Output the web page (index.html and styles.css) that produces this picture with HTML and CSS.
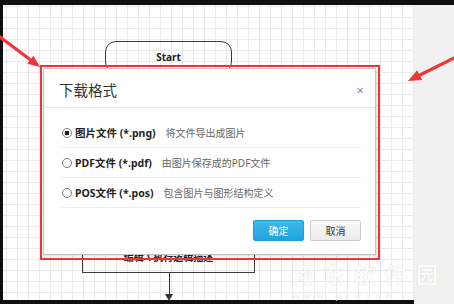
FILE: index.html
```html
<!DOCTYPE html>
<html lang="zh-CN">
<head>
<meta charset="utf-8">
<title>下载格式</title>
<link rel="stylesheet" href="styles.css">
</head>
<body>
<div class="screen">
  <div class="canvas">
    <div class="node start">Start</div>
    <div class="node process"><span>编辑 \ 执行逻辑描述</span></div>
    <div class="connector"></div>
  </div>
  <div class="side"></div>

  <div class="dialog">
    <div class="dlg-head">
      <span class="dlg-title">下载格式</span>
      <span class="dlg-close">×</span>
    </div>
    <div class="dlg-body">
      <div class="opt">
        <span class="radio checked"></span>
        <span class="opt-label">图片文件 (*.png)</span>
        <span class="opt-desc">将文件导出成图片</span>
      </div>
      <div class="opt">
        <span class="radio"></span>
        <span class="opt-label">PDF文件 (*.pdf)</span>
        <span class="opt-desc">由图片保存成的PDF文件</span>
      </div>
      <div class="opt">
        <span class="radio"></span>
        <span class="opt-label">POS文件 (*.pos)</span>
        <span class="opt-desc">包含图片与图形结构定义</span>
      </div>
    </div>
    <div class="dlg-foot">
      <span class="btn btn-primary">确定</span>
      <span class="btn btn-default">取消</span>
    </div>
  </div>

  <div class="annot"></div>
  <svg class="arrows" width="454" height="304" viewBox="0 0 454 304">
    <line x1="-2" y1="35.5" x2="32" y2="61" stroke="#ef3535" stroke-width="3.2"/>
    <polygon points="40,67 27.4,63.8 33.4,55.8" fill="#ef3535"/>
    <line x1="456" y1="57" x2="419" y2="75.5" stroke="#ef3535" stroke-width="3.2"/>
    <polygon points="408,81 422.1,80.1 417.1,70.3" fill="#ef3535"/>
  </svg>

  <div class="watermark">
    <div class="wm-big">河东软件园</div>
    <div class="wm-small">www.pc0359.cn</div>
  </div>
</div>
</body>
</html>
```

FILE: styles.css
```css
html, body {
  margin: 0;
  padding: 0;
}

body {
  font-family: "Noto Sans", "Noto Sans CJK SC", sans-serif;
}

.screen {
  position: relative;
  width: 454px;
  height: 304px;
  box-sizing: border-box;
  padding: 5px 0 0 3px;
  background: #101010;
  display: flex;
  align-items: stretch;
  overflow: hidden;
}

.canvas {
  position: relative;
  width: 411px;
  margin-bottom: 4px;
  background-color: #ffffff;
  background-image:
    linear-gradient(to right, #eaeaea 1px, transparent 1px),
    linear-gradient(to bottom, #eaeaea 1px, transparent 1px);
  background-size: 11px 11px;
  background-position: 3px 1px;
}

.side {
  flex: 1;
  background: #f1f1f1;
}

.node {
  position: absolute;
  box-sizing: border-box;
  border: 1.5px solid #3a3a3a;
  display: flex;
  align-items: center;
  justify-content: center;
  font-weight: bold;
  font-size: 10px;
  color: #222;
}

.start {
  left: 102px;
  top: 36px;
  width: 127px;
  height: 32px;
  border-radius: 11px;
}

.process {
  left: 79px;
  top: 230px;
  width: 173px;
  height: 38px;
  padding-top: 4px;
  font-size: 10px;
}

.connector {
  position: absolute;
  left: 165.5px;
  top: 268px;
  width: 1.5px;
  height: 22px;
  background: #333;
}

.connector::after {
  content: "";
  position: absolute;
  left: -3.5px;
  top: 21px;
  border-left: 4.25px solid transparent;
  border-right: 4.25px solid transparent;
  border-top: 7px solid #333;
}

.dialog {
  position: absolute;
  left: 43px;
  top: 68px;
  width: 333px;
  height: 187px;
  box-sizing: border-box;
  background: #ffffff;
  border: 1px solid #c2c2c2;
  box-shadow: 1px 1px 2px rgba(0, 0, 0, 0.15);
  display: flex;
  flex-direction: column;
}

.dlg-head {
  height: 39px;
  box-sizing: border-box;
  border-bottom: 1px solid #e8e8e8;
  display: flex;
  align-items: center;
  justify-content: space-between;
  padding: 3px 11px 0 15px;
}

.dlg-title {
  font-size: 14.5px;
  color: #333;
}

.dlg-close {
  font-size: 13px;
  color: #8a8a8a;
}

.dlg-body {
  padding: 10px 14px 0 15px;
}

.opt {
  height: 30px;
  box-sizing: border-box;
  border-bottom: 1px solid #ededed;
  display: flex;
  align-items: center;
  padding-left: 3px;
}

.radio {
  width: 10px;
  height: 10px;
  box-sizing: border-box;
  border: 1px solid #7a7a7a;
  border-radius: 50%;
  margin-right: 3px;
  flex: none;
}

.radio.checked {
  background: radial-gradient(circle, #222 0 2.2px, transparent 2.6px);
}

.opt-label {
  font-weight: bold;
  font-size: 10.5px;
  color: #222;
}

.opt-desc {
  margin-left: 10px;
  font-size: 10px;
  color: #666;
}

.dlg-foot {
  display: flex;
  justify-content: flex-end;
  gap: 6px;
  padding: 12px 14px 0 0;
}

.btn {
  width: 51px;
  height: 21px;
  box-sizing: border-box;
  border-radius: 2px;
  display: flex;
  align-items: center;
  justify-content: center;
  font-size: 10px;
}

.btn-primary {
  background: linear-gradient(#40b9ec, #1fa3dc);
  border: 1px solid #1e9fd6;
  color: #ffffff;
}

.btn-default {
  background: linear-gradient(#f9f9f9, #ececec);
  border: 1px solid #cdcdcd;
  color: #333;
}

.annot {
  position: absolute;
  left: 40px;
  top: 65px;
  width: 340px;
  height: 195px;
  box-sizing: border-box;
  border: 2px solid #f23333;
}

.arrows {
  position: absolute;
  left: 0;
  top: 0;
  pointer-events: none;
}

.watermark {
  position: absolute;
  left: 292px;
  top: 257px;
  color: rgba(255, 255, 255, 0.95);
  text-shadow: 0 0 1px rgba(0, 0, 0, 0.18);
  display: flex;
  flex-direction: column;
}

.wm-big {
  font-size: 22px;
  font-weight: bold;
  letter-spacing: 9px;
}

.wm-small {
  font-size: 9px;
  letter-spacing: 5px;
}
```
